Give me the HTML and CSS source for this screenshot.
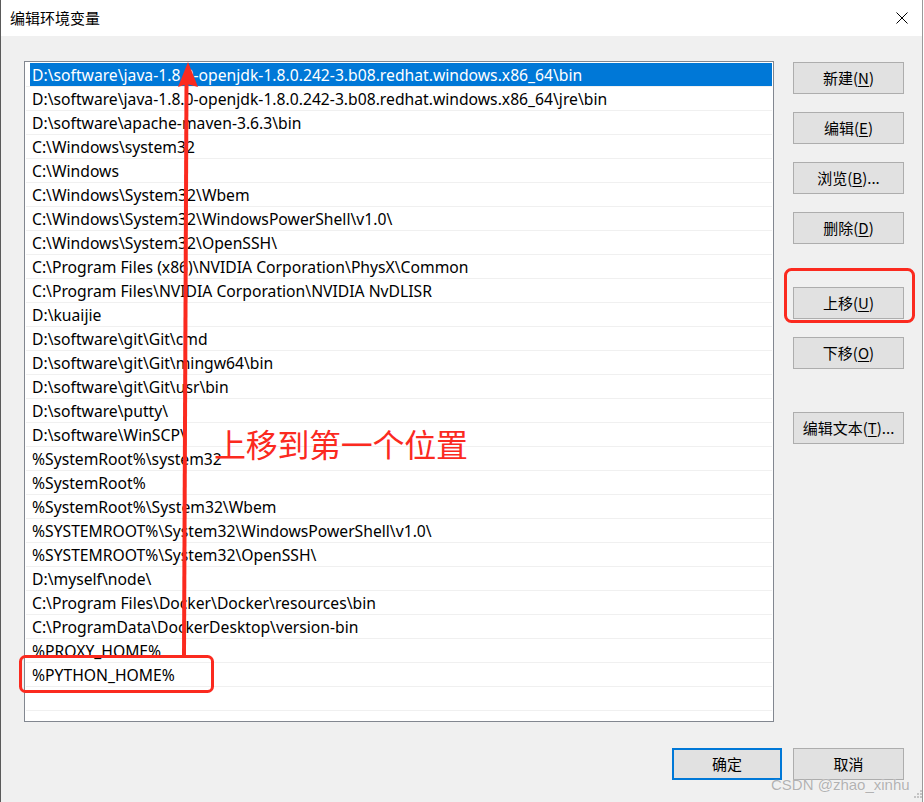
FILE: index.html
```html
<!DOCTYPE html>
<html lang="zh">
<head>
<meta charset="utf-8">
<title>编辑环境变量</title>
<link rel="stylesheet" href="styles.css">
</head>
<body>
<div class="window">
  <div class="titlebar">
    <span class="title">编辑环境变量</span>
    <svg class="close" width="12" height="12" viewBox="0 0 12 12"><path d="M0.5 0.5 L11.5 11.5 M11.5 0.5 L0.5 11.5" stroke="#000" stroke-width="1" fill="none"/></svg>
  </div>
  <div class="content">
    <div class="main">
      <div class="list">
        <div class="row selected"><span>D:\software\java-1.8.0-openjdk-1.8.0.242-3.b08.redhat.windows.x86_64\bin</span></div>
        <div class="row"><span>D:\software\java-1.8.0-openjdk-1.8.0.242-3.b08.redhat.windows.x86_64\jre\bin</span></div>
        <div class="row"><span>D:\software\apache-maven-3.6.3\bin</span></div>
        <div class="row"><span>C:\Windows\system32</span></div>
        <div class="row"><span>C:\Windows</span></div>
        <div class="row"><span>C:\Windows\System32\Wbem</span></div>
        <div class="row"><span>C:\Windows\System32\WindowsPowerShell\v1.0\</span></div>
        <div class="row"><span>C:\Windows\System32\OpenSSH\</span></div>
        <div class="row"><span>C:\Program Files (x86)\NVIDIA Corporation\PhysX\Common</span></div>
        <div class="row"><span>C:\Program Files\NVIDIA Corporation\NVIDIA NvDLISR</span></div>
        <div class="row"><span>D:\kuaijie</span></div>
        <div class="row"><span>D:\software\git\Git\cmd</span></div>
        <div class="row"><span>D:\software\git\Git\mingw64\bin</span></div>
        <div class="row"><span>D:\software\git\Git\usr\bin</span></div>
        <div class="row"><span>D:\software\putty\</span></div>
        <div class="row"><span>D:\software\WinSCP\</span></div>
        <div class="row"><span>%SystemRoot%\system32</span></div>
        <div class="row"><span>%SystemRoot%</span></div>
        <div class="row"><span>%SystemRoot%\System32\Wbem</span></div>
        <div class="row"><span>%SYSTEMROOT%\System32\WindowsPowerShell\v1.0\</span></div>
        <div class="row"><span>%SYSTEMROOT%\System32\OpenSSH\</span></div>
        <div class="row"><span>D:\myself\node\</span></div>
        <div class="row"><span>C:\Program Files\Docker\Docker\resources\bin</span></div>
        <div class="row"><span>C:\ProgramData\DockerDesktop\version-bin</span></div>
        <div class="row"><span>%PROXY_HOME%</span></div>
        <div class="row"><span>%PYTHON_HOME%</span></div>
        <div class="row"><span></span></div>
        <div class="row"><span></span></div>
      </div>
      <div class="buttons">
        <div class="btn">新建(<u>N</u>)</div>
        <div class="btn">编辑(<u>E</u>)</div>
        <div class="btn">浏览(<u>B</u>)...</div>
        <div class="btn">删除(<u>D</u>)</div>
        <div class="btn sep">上移(<u>U</u>)</div>
        <div class="btn">下移(<u>O</u>)</div>
        <div class="btn sep">编辑文本(<u>T</u>)...</div>
      </div>
    </div>
    <div class="footer">
      <div class="btn default">确定</div>
      <div class="btn">取消</div>
    </div>
  </div>

  <svg class="overlay" width="923" height="802" viewBox="0 0 923 802">
    <line x1="183" y1="655" x2="185.5" y2="82" stroke="#fb2a1f" stroke-width="4"/>
    <polygon points="187,62 177,87 186,84 197,87" fill="#fb2a1f"/>
    <rect x="784.5" y="269.5" width="128" height="52" rx="6" ry="6" fill="none" stroke="#fb2a1f" stroke-width="3"/>
    <rect x="19.5" y="656.5" width="192" height="35" rx="5" ry="5" fill="none" stroke="#fb2a1f" stroke-width="3"/>
    <g fill="#c4c4c4">
      <rect x="919" y="790" width="2" height="2"/>
      <rect x="916" y="793" width="2" height="2"/>
      <rect x="919" y="793" width="2" height="2"/>
      <rect x="913" y="796" width="2" height="2"/>
      <rect x="916" y="796" width="2" height="2"/>
      <rect x="919" y="796" width="2" height="2"/>
    </g>
  </svg>
  <div class="note">上移到第一个位置</div>
  <div class="watermark">CSDN @zhao_xinhu</div>
</div>
</body>
</html>
```

FILE: styles.css
```css
html, body {
  margin: 0;
  padding: 0;
  background: #ffffff;
}
body {
  width: 924px;
  height: 802px;
  overflow: hidden;
  font-family: "Noto Sans", "Noto Sans CJK SC", sans-serif;
  color: #000;
}
.window {
  position: relative;
  width: 923px;
  height: 802px;
  box-sizing: border-box;
  border-left: 1px solid #5a5a5a;
  border-right: 1px solid #9a9a9a;
  background: #f0f0f0;
  display: flex;
  flex-direction: column;
}
.titlebar {
  height: 36px;
  flex: none;
  background: #ffffff;
  display: flex;
  align-items: center;
  justify-content: space-between;
  padding: 0 14px 0 9px;
}
.title {
  font-family: "Noto Sans CJK SC", sans-serif;
  font-size: 15px;
  line-height: 20px;
  margin-top: -1px;
}
.close {
  display: block;
  margin-top: -1px;
}
.content {
  padding: 25px 0 0 23px;
  display: flex;
  flex-direction: column;
}
.main {
  display: flex;
  align-items: flex-start;
  gap: 19px;
}
.list {
  width: 750px;
  height: 661px;
  box-sizing: border-box;
  border: 1px solid #828790;
  background: #ffffff;
  padding: 1px 1px 0 1px;
  overflow: hidden;
}
.row {
  height: 23px;
  border-bottom: 1px solid #f0f0f0;
  display: flex;
  align-items: center;
  padding-left: 6px;
  font-size: 15.7px;
  white-space: nowrap;
}
.row span {
  line-height: 20px;
}
.row.selected {
  background: linear-gradient(to right, transparent 4px, #0078d7 4px);
  color: #ffffff;
}
.buttons {
  display: flex;
  flex-direction: column;
  gap: 18px;
  padding-top: 1px;
}
.btn {
  width: 111px;
  height: 32px;
  box-sizing: border-box;
  border: 1px solid #adadad;
  background: #e1e1e1;
  display: flex;
  align-items: center;
  justify-content: center;
  font-family: "Noto Sans CJK SC", sans-serif;
  font-size: 15px;
  padding-bottom: 1px;
}
.btn u {
  text-decoration-thickness: 1px;
  text-underline-offset: 2px;
}
.btn.sep {
  margin-top: 25px;
}
.footer {
  display: flex;
  gap: 11px;
  margin-top: 26px;
  padding-left: 648px;
}
.btn.default {
  width: 110px;
  border: 2px solid #0078d7;
}
.overlay {
  position: absolute;
  left: 0;
  top: 0;
  pointer-events: none;
}
.note {
  position: absolute;
  left: 213px;
  top: 421px;
  font-family: "Noto Sans CJK SC", sans-serif;
  font-size: 32px;
  line-height: 44px;
  color: #fb2a1f;
  letter-spacing: -0.3px;
}
.watermark {
  position: absolute;
  left: 770px;
  top: 775px;
  font-family: "Liberation Sans", sans-serif;
  font-size: 15px;
  line-height: 20px;
  color: #b2b2b2;
  text-shadow: 0 0 1px #ffffff;
}
```
